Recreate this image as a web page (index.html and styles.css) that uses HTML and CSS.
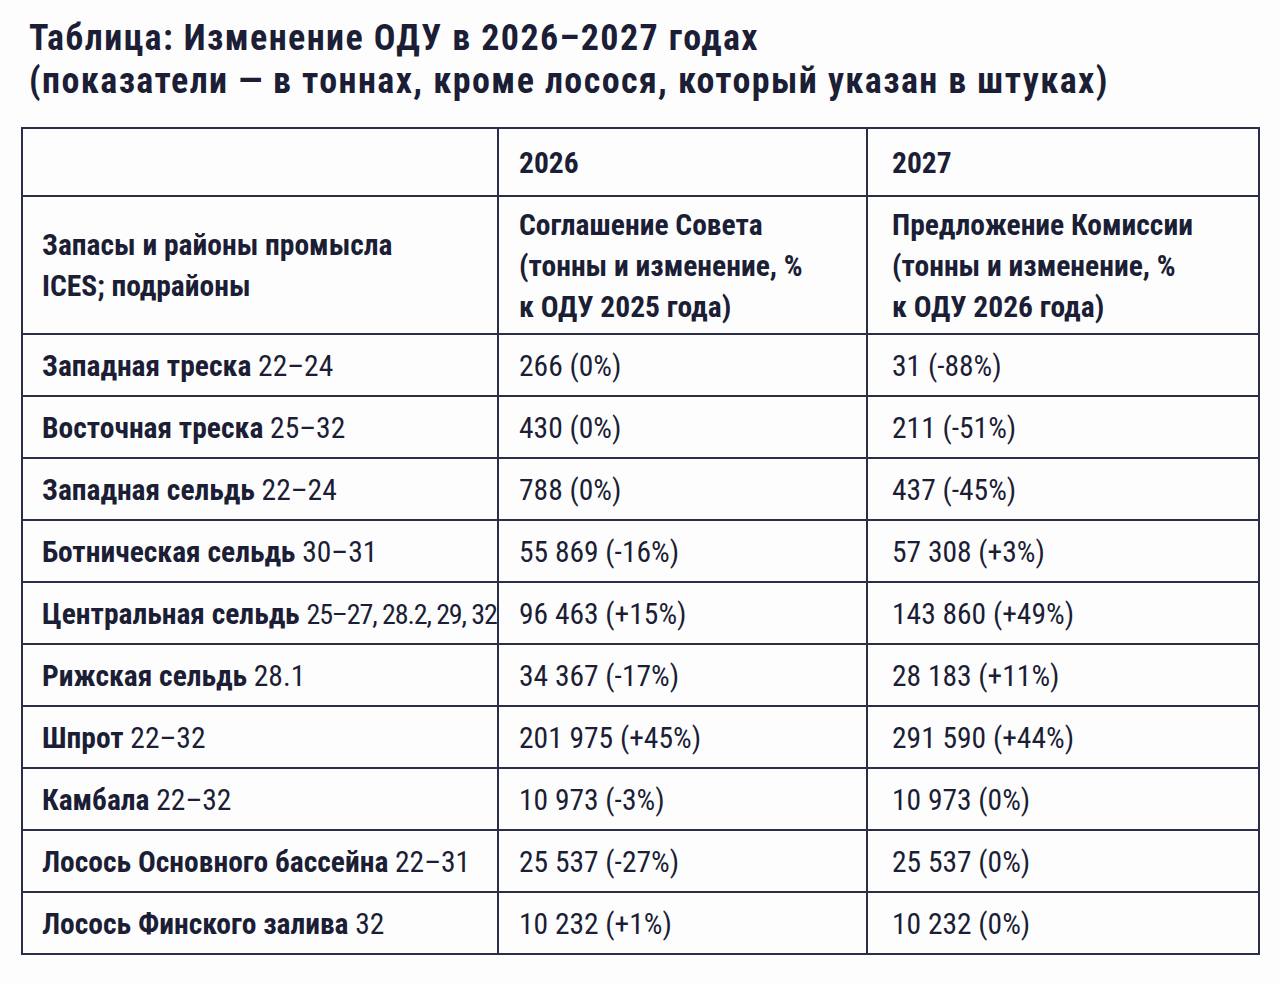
FILE: index.html
```html
<!DOCTYPE html>
<html lang="ru">
<head>
<meta charset="utf-8">
<title>Таблица ОДУ</title>
<link rel="stylesheet" href="styles.css">
</head>
<body>
<div class="page">
  <h1 class="title">Таблица: Изменение ОДУ в 2026–2027 годах<br>(показатели — в тоннах, кроме лосося, который указан в штуках)</h1>
  <table class="tac">
    <colgroup>
      <col class="c1"><col class="c2"><col class="c3">
    </colgroup>
    <tr class="hrow1">
      <th></th>
      <th>2026</th>
      <th>2027</th>
    </tr>
    <tr class="hrow2">
      <th>Запасы и районы промысла<br>ICES; подрайоны</th>
      <th>Соглашение Совета<br>(тонны и изменение, %<br>к ОДУ 2025 года)</th>
      <th>Предложение Комиссии<br>(тонны и изменение, %<br>к ОДУ 2026 года)</th>
    </tr>
    <tr><td><b>Западная треска</b> 22–24</td><td>266 (0%)</td><td>31 (-88%)</td></tr>
    <tr><td><b>Восточная треска</b> 25–32</td><td>430 (0%)</td><td>211 (-51%)</td></tr>
    <tr><td><b>Западная сельдь</b> 22–24</td><td>788 (0%)</td><td>437 (-45%)</td></tr>
    <tr><td><b>Ботническая сельдь</b> 30–31</td><td>55 869 (-16%)</td><td>57 308 (+3%)</td></tr>
    <tr><td><b>Центральная сельдь</b> <span class="tight">25–27, 28.2, 29, 32</span></td><td>96 463 (+15%)</td><td>143 860 (+49%)</td></tr>
    <tr><td><b>Рижская сельдь</b> 28.1</td><td>34 367 (-17%)</td><td>28 183 (+11%)</td></tr>
    <tr><td><b>Шпрот</b> 22–32</td><td>201 975 (+45%)</td><td>291 590 (+44%)</td></tr>
    <tr><td><b>Камбала</b> 22–32</td><td>10 973 (-3%)</td><td>10 973 (0%)</td></tr>
    <tr><td><b>Лосось Основного бассейна</b> 22–31</td><td>25 537 (-27%)</td><td>25 537 (0%)</td></tr>
    <tr><td><b>Лосось Финского залива</b> 32</td><td>10 232 (+1%)</td><td>10 232 (0%)</td></tr>
  </table>
</div>
</body>
</html>
```
FILE: styles.css
```css
html, body {
  margin: 0;
  padding: 0;
  background: #fdfdfe;
}
body {
  font-family: "Roboto", "Liberation Sans", sans-serif;
  font-stretch: 75%;
  color: #1b1e35;
}
.page {
  padding: 17px 0 0 21px;
}
.title {
  margin: 0 0 24px 8px;
  font-size: 36px;
  line-height: 43px;
  font-weight: 700;
  letter-spacing: 1.4px;
}
.tac {
  border-collapse: collapse;
  width: 1237px;
  table-layout: fixed;
  font-size: 29.5px;
}
.c1 { width: 476px; }
.c2 { width: 369px; }
.c3 { width: 392px; }
.tac th, .tac td {
  border: 2px solid #2a2f47;
  text-align: left;
  vertical-align: middle;
  padding: 2px 0 0 20px;
  white-space: nowrap;
}
.tac th { font-weight: 700; }
.tac td:first-child, .tac th:first-child { padding-left: 19px; }
.tac td:last-child, .tac th:last-child { padding-left: 24px; }
.hrow1 th { height: 64px; }
.hrow2 th { height: 134px; line-height: 41px; }
.tac td { height: 58px; line-height: 32px; }
.tight { font-size: 28px; letter-spacing: -1.1px; }
```
